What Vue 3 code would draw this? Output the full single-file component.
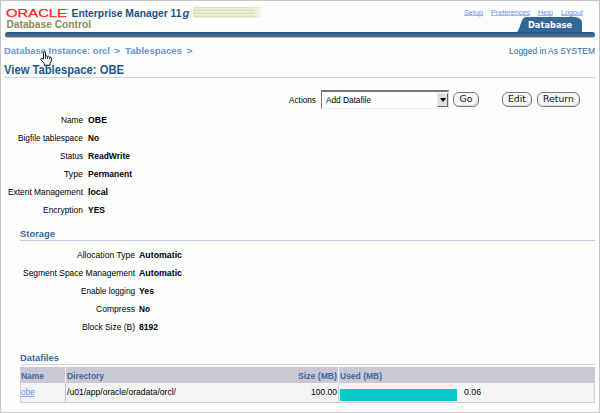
<script setup>
const links = ['Setup', 'Preferences', 'Help', 'Logout']
const general = [
  ['Name', 'OBE', 22, 19], ['Bigfile tablespace', 'No', 65, 11], ['Status', 'ReadWrite', 23, 42],
  ['Type', 'Permanent', 19, 44], ['Extent Management', 'local', 75, 20], ['Encryption', 'YES', 40, 17],
]
const storage = [
  ['Allocation Type', 'Automatic', 58, 43], ['Segment Space Management', 'Automatic', 112, 43],
  ['Enable logging', 'Yes', 54, 15], ['Compress', 'No', 39, 11], ['Block Size (B)', '8192', 53, 19],
]
const linkWidths = [19, 39, 15, 22]
</script>

<template>
  <div class="page">
    <header class="header">
      <div class="brand">
        <div class="brand-top">
          <svg class="logo" width="187" height="17">
            <text class="oracle" x="0" y="13" textLength="61" lengthAdjust="spacingAndGlyphs">ORACLE</text>
            <rect x="61.5" y="5" width="1.2" height="1.2" fill="#f88" />
            <text class="em" x="65.5" y="13" textLength="110" lengthAdjust="spacingAndGlyphs">Enterprise Manager 11</text>
            <text class="em it" x="176.5" y="13">g</text>
          </svg>
          <div class="stripes"></div>
        </div>
        <svg class="control" width="90" height="14">
          <text x="0.5" y="9" textLength="84.5" lengthAdjust="spacingAndGlyphs">Database Control</text>
        </svg>
      </div>
      <div class="right">
        <nav class="links">
          <a v-for="(l, i) in links" :key="l" :style="{ width: linkWidths[i] + 'px' }">
            <svg :width="linkWidths[i]" height="10"><text x="0" y="8" :textLength="linkWidths[i]" lengthAdjust="spacingAndGlyphs">{{ l }}</text></svg>
          </a>
        </nav>
        <svg class="tab" width="66" height="15" viewBox="0 0 66 15">
          <path d="M0 15 C3 13 4 0 9 0 H58 Q65 1 65 6 V15 Z" fill="#336699" />
          <text x="11" y="11" textLength="44" lengthAdjust="spacingAndGlyphs">Database</text>
        </svg>
      </div>
    </header>
    <div class="bar"></div>

    <div class="crumbs">
      <svg class="trail" width="200" height="12">
        <text x="0" y="9" textLength="106" lengthAdjust="spacingAndGlyphs">Database Instance: orcl</text>
        <text x="110" y="9" textLength="6" lengthAdjust="spacingAndGlyphs">&gt;</text>
        <text x="121" y="9" textLength="57" lengthAdjust="spacingAndGlyphs">Tablespaces</text>
        <text x="182.5" y="9" textLength="6" lengthAdjust="spacingAndGlyphs">&gt;</text>
      </svg>
      <svg class="login" width="86" height="12"><text x="0" y="9" textLength="86" lengthAdjust="spacingAndGlyphs">Logged in As SYSTEM</text></svg>
    </div>
    <h1><svg width="124" height="14"><text x="0" y="10.5" textLength="120" lengthAdjust="spacingAndGlyphs">View Tablespace: OBE</text></svg></h1>

    <div class="actions">
      <svg class="actions-label" width="27" height="12"><text x="0" y="9" textLength="27" lengthAdjust="spacingAndGlyphs">Actions</text></svg>
      <div class="select">
        <svg width="45" height="12"><text x="0" y="9" textLength="45" lengthAdjust="spacingAndGlyphs">Add Datafile</text></svg>
        <span class="arrow"><svg width="6" height="4"><path d="M0 0H6L3 4Z" /></svg></span>
      </div>
      <button class="go">Go</button>
      <button class="edit">Edit</button>
      <button class="return">Return</button>
    </div>

    <dl class="general">
      <div v-for="r in general" :key="r[0]" class="row">
        <dt><svg :width="r[2]" height="12"><text x="0" y="9" :textLength="r[2]" lengthAdjust="spacingAndGlyphs">{{ r[0] }}</text></svg></dt>
        <dd><svg :width="r[3]" height="12"><text x="0" y="9" :textLength="r[3]" lengthAdjust="spacingAndGlyphs">{{ r[1] }}</text></svg></dd>
      </div>
    </dl>

    <section class="storage">
      <h2><svg width="40" height="12"><text x="0" y="9" textLength="35" lengthAdjust="spacingAndGlyphs">Storage</text></svg></h2>
      <dl>
        <div v-for="r in storage" :key="r[0]" class="row">
          <dt><svg :width="r[2]" height="12"><text x="0" y="9" :textLength="r[2]" lengthAdjust="spacingAndGlyphs">{{ r[0] }}</text></svg></dt>
          <dd><svg :width="r[3]" height="12"><text x="0" y="9" :textLength="r[3]" lengthAdjust="spacingAndGlyphs">{{ r[1] }}</text></svg></dd>
        </div>
      </dl>
    </section>

    <section class="datafiles">
      <h2><svg width="44" height="12"><text x="0" y="9" textLength="39" lengthAdjust="spacingAndGlyphs">Datafiles</text></svg></h2>
      <div class="table">
        <div class="head">
          <span><svg width="23" height="16"><text x="0" y="12" textLength="23" lengthAdjust="spacingAndGlyphs">Name</text></svg></span>
          <span class="dir"><svg width="37" height="16"><text x="0" y="12" textLength="37" lengthAdjust="spacingAndGlyphs">Directory</text></svg></span>
          <span class="num"><svg width="39" height="16"><text x="0" y="12" textLength="39" lengthAdjust="spacingAndGlyphs">Size (MB)</text></svg></span>
          <span class="used"><svg width="42" height="16"><text x="0" y="12" textLength="42" lengthAdjust="spacingAndGlyphs">Used (MB)</text></svg></span>
        </div>
        <div class="body">
          <span><a><svg width="14" height="13"><text x="0" y="12" textLength="14" lengthAdjust="spacingAndGlyphs">obe</text></svg></a></span>
          <span class="path"><svg width="109" height="16"><text x="0" y="12" textLength="109" lengthAdjust="spacingAndGlyphs">/u01/app/oracle/oradata/orcl/</text></svg></span>
          <span class="num"><svg width="26" height="16"><text x="0" y="12" textLength="26" lengthAdjust="spacingAndGlyphs">100.00</text></svg></span>
          <span class="used meter"><i></i><svg width="17" height="16"><text x="0" y="12" textLength="17" lengthAdjust="spacingAndGlyphs">0.06</text></svg></span>
        </div>
      </div>
    </section>

    <svg class="cursor" width="12" height="15" viewBox="0 0 12 15">
      <path d="M3.5 8V1.5Q4.5 .2 5.5 1.5V5Q6.8 4.3 7.5 5.5Q8.8 4.8 9.5 6Q11 5.5 11.3 7V10.5L10 12.5V14.3H4.5V12.8L.8 8.6Q.8 6.9 2.3 7.5Z" fill="#fff" stroke="#111" />
      <path d="M5.5 5V8M7.5 5.5V8M9.5 6V8" stroke="#111" stroke-width=".8" />
    </svg>
  </div>
</template>

<style>
body { background: #fcfefc; }
</style>
<style scoped>
.page {
  position: relative; box-sizing: border-box; width: 600px; height: 413px; overflow: hidden;
  border: 1px solid #c6c6c6; background: #fcfefc; color: #111;
  font: 8.8px/12px "Liberation Sans", Arial, sans-serif;
}
svg { display: block; overflow: visible; flex: none; }
h1, h2, dl, dt, dd { margin: 0; }
.header { display: flex; justify-content: space-between; height: 31px; padding: 3px 16px 0 5px; box-sizing: border-box; }
.brand-top { display: flex; height: 15px; }
.oracle { font-size: 10.8px; fill: #f22; stroke: #f22; stroke-width: .25px; }
.em { font: bold 11px "Liberation Sans", sans-serif; fill: #1f5086; }
.it { font-style: italic; }
.stripes {
  width: 70px; height: 11px; margin-top: 3px;
  background: repeating-linear-gradient(#dcddb6 0 1px, #eff0d8 1px 2px, #e5e6ca 2px 3px);
  mask-image: linear-gradient(90deg, #000 85%, transparent);
}
.control { font: bold 10.6px "Liberation Sans", sans-serif; fill: #8c8b57; }
.right { display: flex; flex-direction: column; align-items: flex-end; padding-top: 3px; }
.links { display: flex; gap: 8px; height: 10px; font-size: 7.6px; }
.links a { height: 8px; border-bottom: 1px solid #a4b9e8; }
.links text { fill: #7093d8; }
.tab text { font: bold 9px "DejaVu Sans", sans-serif; fill: #fff; }
.bar {
  height: 6px; margin: 0 4px; border-radius: 3px;
  background: linear-gradient(#1f4f82 0 1px, #336699 1px 4px, #67686c 4px 5px, #bbb5b2 5px);
}
.crumbs { display: flex; justify-content: space-between; margin-top: 7px; padding: 0 4px 0 3px; }
.trail { font: bold 8.4px "Liberation Sans", sans-serif; fill: #6893d8; }
.login { fill: #336699; }
h1 { height: 15px; margin: 6px 4px 0 3px; font-size: 12px; line-height: 14px; border-bottom: 1px solid #d2d1e1; box-sizing: border-box; }
h1 svg { fill: #24578d; }
.actions { display: flex; align-items: center; height: 20px; margin: 11px 0 0 288px; }
.actions-label { margin: 1px 5px 0 0; }
.select {
  display: flex; justify-content: space-between; align-items: center; width: 128px; height: 19px; box-sizing: border-box;
  padding-left: 4px; border: 1px solid #767676; border-top-width: 2px; border-right-color: #ddd; border-bottom-color: #eee;
  background: #fdfefd;
}
.arrow {
  display: flex; align-items: center; justify-content: center; width: 11px; height: 14px; box-sizing: border-box;
  background: #ddd; border: solid #eee; border-width: 1px; border-right-color: #666; border-bottom-color: #666;
}
button {
  height: 15px; box-sizing: border-box; padding: 0; border: 1px solid #777; border-radius: 6px; background: #f6f6f3; color: #111;
  box-shadow: inset -1px -1px #ddd; font: 9.3px/12px "DejaVu Sans", sans-serif;
}
.go { width: 26px; margin-left: 4px; }
.edit { width: 30px; margin-left: 23px; }
.return { width: 43px; margin-left: 5px; }
.general { margin-top: 2px; }
.row { display: flex; gap: 5px; height: 18px; align-items: center; }
.general dt { width: 82px; }
dt, dd { display: flex; justify-content: flex-end; }
dd { font-weight: bold; fill: #000; }
h2 { font-size: 9px; line-height: 12px; fill: #3769a3; }
.storage { margin: 9px 4px 0 19px; }
.storage h2 { height: 13px; border-bottom: 1px solid #c8cbdf; box-sizing: border-box; }
.storage dl { padding-top: 5px; }
.storage dt { width: 115px; }
.storage .row { gap: 4px; }
.datafiles { margin: 16px 4px 0 19px; }
.datafiles h2 { height: 13px; border-bottom: 1px solid #d5d4df; box-sizing: border-box; }
.table { margin-top: 2px; border: 1px solid #cfced8; border-top: 0; box-sizing: border-box; width: 575px; }
.head, .body { display: grid; grid-template-columns: 44px 1fr 57px 256px; }
.head { height: 16px; background: #cbc8d4; fill: #3769a3; font-weight: bold; }
.body { height: 19px; background: #f3f4f3; }
.head span, .body > span { padding-left: 1px; }
.head span:first-child, .body > span:first-child { padding-left: 0; }
.head .dir { border-left: 1px solid #eee; }
.body a { display: block; width: 14px; fill: #6893d8; border-bottom: 1px solid #8fabe2; }
.body .path, .body .used { border-left: 1px solid #c8c7d2; }
.head .used { border-left: 1px solid #f8f8f8; }
.num { display: flex; justify-content: flex-end; padding-right: 1px; }
.meter { display: flex; }
.meter i { width: 117px; height: 12px; margin: 6px 7px 0 0; background: #06cbca; }
.cursor { position: absolute; left: 39px; top: 50px; }
</style>
